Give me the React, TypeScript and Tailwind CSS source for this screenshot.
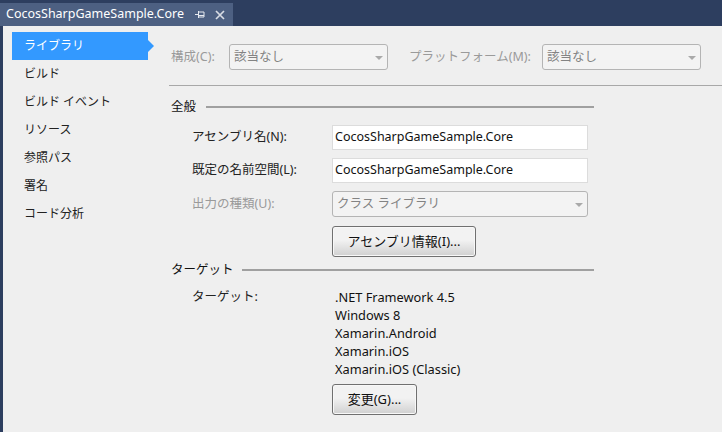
const font = { fontFamily: '"Noto Sans", "Noto Sans CJK JP", sans-serif' };

function Caret() {
  return (
    <svg width="8" height="4" viewBox="0 0 8 4" className="shrink-0 mt-[2px]">
      <path d="M0 0h8L4 4z" fill="#a9a9a9" />
    </svg>
  );
}

function Combo({ text, width }: { text: string; width: string }) {
  return (
    <div className={`${width} h-[26px] shrink-0 flex items-center justify-between pl-[4px] pr-[4px] bg-[#f3f3f3] border border-[#b4b4b4] rounded-[3px] text-[#838383]`}>
      <span>{text}</span>
      <Caret />
    </div>
  );
}

function Button({ text, width }: { text: string; width: string }) {
  return (
    <div className={`${width} h-[31px] flex items-center justify-center bg-gradient-to-b from-[#f2f2f2] from-45% to-[#d0d0d0] border border-[#707070] rounded-[3px] text-[#111] text-[13px] shadow-[inset_0_0_0_1px_#f8f8f8]`}>
      {text}
    </div>
  );
}

function Section({ title, lineWidth }: { title: string; lineWidth: string }) {
  return (
    <div className="flex items-center justify-between w-[423px] h-[20px] text-[#111]">
      <span>{title}</span>
      <div className={`${lineWidth} h-[2px] bg-[#a0a0a0]`} />
    </div>
  );
}

function Field({ label, value }: { label: string; value: string }) {
  return (
    <div className="flex items-center h-[25px]">
      <span className="w-[161px] pl-[21px] text-[#222]">{label}</span>
      <div className="w-[256px] h-[25px] flex items-center pl-[2px] bg-white border border-[#dcdcdc] text-[#111]">{value}</div>
    </div>
  );
}

const nav = ["ビルド", "ビルド イベント", "リソース", "参照パス", "署名", "コード分析"];
const targets = [".NET Framework 4.5", "Windows 8", "Xamarin.Android", "Xamarin.iOS", "Xamarin.iOS (Classic)"];

export default function App() {
  return (
    <div className="w-[722px] h-[432px] overflow-hidden flex flex-col bg-[#efefef] text-[12.5px]" style={font}>
      <div className="h-[26px] shrink-0 bg-[#2d3e5f] pt-[3px]">
        <div className="w-[233px] h-[23px] bg-[#4d6082] flex items-center pl-[6px] text-white text-[12.5px]">
          <span className="w-[189px] whitespace-nowrap">CocosSharpGameSample.Core</span>
          <svg width="10" height="9" viewBox="0 0 10 9" className="mr-[10px]">
            <path d="M0 4.500h3M3.500 1v7M3.500 2h5.500v5H3.500M3.500 5.500h5.500" stroke="#e6e9ef" fill="none" strokeWidth="1" />
          </svg>
          <svg width="10" height="10" viewBox="0 0 10 10">
            <path d="M1 1l8 8M9 1l-8 8" stroke="#d8dce4" fill="none" strokeWidth="1.7" />
          </svg>
        </div>
      </div>
      <div className="flex-1 flex border-l-[3px] border-[#2d3e5f]">
        <div className="w-[166px] shrink-0 pt-[6px] pl-[9px] text-[12px]">
          <div className="relative w-[136px] h-[28px] flex items-center pl-[12px] bg-[#3399ff] text-white">
            ライブラリ
            <div className="absolute left-full top-[8px] w-0 h-0 border-y-[6px] border-y-transparent border-l-[6px] border-l-[#3399ff]" />
          </div>
          {nav.map((n) => (
            <div key={n} className="h-[28px] flex items-center pl-[12px] text-[#222]">{n}</div>
          ))}
        </div>
        <div className="flex-1 min-w-0">
          <div className="h-[60px] pt-[18px] border-b border-[#a8a8a8] flex items-start">
            <div className="flex items-center h-[26px] pl-[2px] text-[#9a9a9a]">
              <span className="w-[58px]">構成(C):</span>
              <Combo text="該当なし" width="w-[159px]" />
              <span className="w-[154px] pl-[21px] whitespace-nowrap">プラットフォーム(M):</span>
              <Combo text="該当なし" width="w-[159px]" />
            </div>
          </div>
          <div className="pl-[2px] pt-[11px]">
            <Section title="全般" lineWidth="w-[388px]" />
            <div className="mt-[8px] flex flex-col gap-[8px]">
              <Field label="アセンブリ名(N):" value="CocosSharpGameSample.Core" />
              <Field label="既定の名前空間(L):" value="CocosSharpGameSample.Core" />
              <div className="flex items-center h-[26px] text-[#9a9a9a]">
                <span className="w-[161px] pl-[21px]">出力の種類(U):</span>
                <Combo text="クラス ライブラリ" width="w-[256px]" />
              </div>
            </div>
            <div className="ml-[161px] mt-[9px] w-fit"><Button text="アセンブリ情報(I)..." width="w-[144px]" /></div>
            <div className="mt-[3px]"><Section title="ターゲット" lineWidth="w-[352px]" /></div>
            <div className="mt-[8px] flex">
              <span className="w-[161px] pl-[21px] h-[18px] leading-[18px] text-[#222]">ターゲット:</span>
              <div className="pl-[3px] leading-[18px] text-[#111] text-[12.8px]">
                {targets.map((t) => <div key={t} className="h-[18px]">{t}</div>)}
              </div>
            </div>
            <div className="ml-[161px] mt-[6px] w-fit"><Button text="変更(G)..." width="w-[85px]" /></div>
          </div>
        </div>
      </div>
    </div>
  );
}
